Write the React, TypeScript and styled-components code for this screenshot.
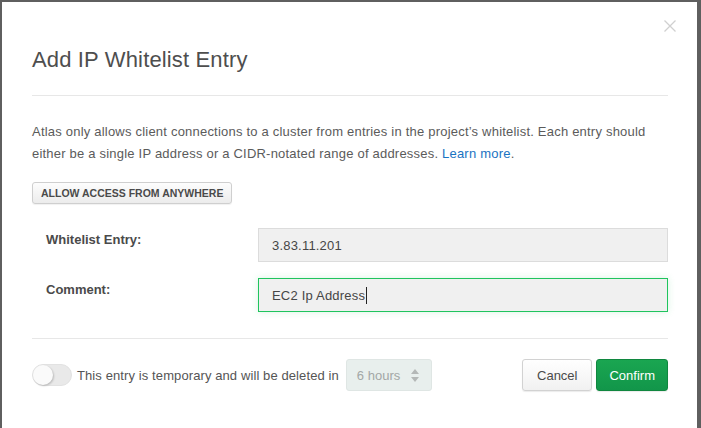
import styled, { createGlobalStyle } from "styled-components";

const GlobalStyle = createGlobalStyle`
  html, body {
    margin: 0;
    padding: 0;
    background: #5f5f5f;
  }
  body {
    font-family: "Liberation Sans", Arial, sans-serif;
    color: #5a5a5a;
  }
`;

const Backdrop = styled.div`
  height: 428px;
  padding: 2px 4px 0 2px;
  box-sizing: border-box;
  overflow: hidden;
`;

const Modal = styled.div`
  position: relative;
  background: #fff;
  height: 100%;
  padding: 0 29px 0 30px;
  box-sizing: border-box;
`;

const Close = styled.button`
  position: absolute;
  top: 15px;
  right: 18px;
  width: 18px;
  height: 18px;
  padding: 0;
  border: 0;
  background: none;
  display: flex;
  align-items: center;
  justify-content: center;
`;

const Header = styled.div`
  padding: 45px 0 22px;
  border-bottom: 1px solid #e7e7e7;
`;

const Title = styled.h2`
  margin: 0;
  font-size: 22px;
  font-weight: 400;
  line-height: 26px;
  color: #4e4e4e;
  letter-spacing: 0.15px;
`;

const Body = styled.div`
  padding: 25px 0 26px;
  border-bottom: 1px solid #e7e7e7;
`;

const Text = styled.p`
  margin: 0;
  font-size: 13px;
  line-height: 22px;
  letter-spacing: 0.21px;
  color: #5b5b5b;
`;

const Link = styled.a`
  color: #1a73c2;
  text-decoration: none;
`;

const SmallButton = styled.button`
  margin-top: 17px;
  height: 22px;
  padding: 0 8px;
  font-family: inherit;
  font-size: 10.5px;
  font-weight: 700;
  color: #4a4a4a;
  background: linear-gradient(#fdfdfd, #ececec);
  border: 1px solid #cfcfcf;
  border-radius: 3px;
  box-shadow: 0 1px 1px rgba(0, 0, 0, 0.06);
  text-transform: uppercase;
`;

const Form = styled.div`
  margin-top: 24px;
  padding-left: 14px;
  display: flex;
  flex-direction: column;
  gap: 16px;
`;

const Row = styled.div`
  display: flex;
  align-items: flex-start;
`;

const Label = styled.label`
  width: 212px;
  padding-top: 4px;
  font-size: 13px;
  font-weight: 700;
  line-height: 16px;
  color: #4a4a4a;
`;

const Input = styled.div<{ $focused?: boolean }>`
  flex: 1;
  height: 34px;
  box-sizing: border-box;
  display: flex;
  align-items: center;
  padding: 0 13px;
  font-size: 13px;
  letter-spacing: 0.2px;
  color: #464646;
  background: #f0f0f0;
  border: 1px solid ${(p) => (p.$focused ? "#1fc45d" : "#dcdcdc")};
  box-shadow: ${(p) => (p.$focused ? "0 0 7px rgba(31, 196, 93, 0.18)" : "none")};
`;

const Caret = styled.span`
  display: inline-block;
  width: 1px;
  height: 17px;
  margin-left: 1px;
  background: #222;
`;

const Footer = styled.div`
  padding-top: 20px;
  display: flex;
  align-items: center;
`;

const Toggle = styled.div`
  position: relative;
  width: 40px;
  height: 22px;
  box-sizing: border-box;
  border-radius: 11px;
  background: #e9e9e9;
  border: 1px solid #e2e2e2;
`;

const Knob = styled.div`
  position: absolute;
  top: 0;
  left: 0;
  width: 20px;
  height: 20px;
  border-radius: 50%;
  background: #fafafa;
  box-shadow: 1px 1px 2px rgba(0, 0, 0, 0.2);
`;

const FooterText = styled.span`
  margin-left: 5px;
  font-size: 13px;
  letter-spacing: 0.1px;
  color: #555;
`;

const Select = styled.div`
  margin-left: 7px;
  width: 86px;
  height: 32px;
  box-sizing: border-box;
  display: flex;
  align-items: center;
  justify-content: space-between;
  padding: 0 12px 0 10px;
  font-size: 13px;
  color: #a3a7a6;
  background: #e8efed;
  border: 1px solid #dfe6e4;
  border-radius: 3px;
`;

const Spacer = styled.div`
  flex: 1;
`;

const Button = styled.button<{ $primary?: boolean }>`
  height: 32px;
  box-sizing: border-box;
  padding: 0 ${(p) => (p.$primary ? "12px" : "14px")};
  margin-left: 4px;
  font-family: inherit;
  font-size: 13px;
  border-radius: 3px;
  color: ${(p) => (p.$primary ? "#fff" : "#4a4a4a")};
  background: ${(p) =>
    p.$primary ? "linear-gradient(#1aa651, #12964a)" : "linear-gradient(#fff, #f1f1f1)"};
  border: 1px solid ${(p) => (p.$primary ? "#10873f" : "#d2d2d2")};
  box-shadow: 0 1px 1px rgba(0, 0, 0, 0.08);
`;

function App() {
  return (
    <>
      <GlobalStyle />
      <Backdrop>
        <Modal>
          <Close aria-label="close">
            <svg width="12" height="12" viewBox="0 0 12 12">
              <path d="M0.5 0.5L11.5 11.5M11.5 0.5L0.5 11.5" stroke="#d0d0d0" strokeWidth="1.3" />
            </svg>
          </Close>
          <Header>
            <Title>Add IP Whitelist Entry</Title>
          </Header>
          <Body>
            <Text>
              Atlas only allows client connections to a cluster from entries in the project’s whitelist. Each entry should
              either be a single IP address or a CIDR-notated range of addresses. <Link href="#">Learn more</Link>.
            </Text>
            <SmallButton>Allow access from anywhere</SmallButton>
            <Form>
              <Row>
                <Label>Whitelist Entry:</Label>
                <Input>3.83.11.201</Input>
              </Row>
              <Row>
                <Label>Comment:</Label>
                <Input $focused>
                  EC2 Ip Address<Caret />
                </Input>
              </Row>
            </Form>
          </Body>
          <Footer>
            <Toggle>
              <Knob />
            </Toggle>
            <FooterText>This entry is temporary and will be deleted in</FooterText>
            <Select>
              6 hours
              <svg width="8" height="13" viewBox="0 0 8 13">
                <path d="M4 0L8 5H0Z M4 13L0 8H8Z" fill="#b4b8b7" />
              </svg>
            </Select>
            <Spacer />
            <Button>Cancel</Button>
            <Button $primary>Confirm</Button>
          </Footer>
        </Modal>
      </Backdrop>
    </>
  );
}

export default App;
